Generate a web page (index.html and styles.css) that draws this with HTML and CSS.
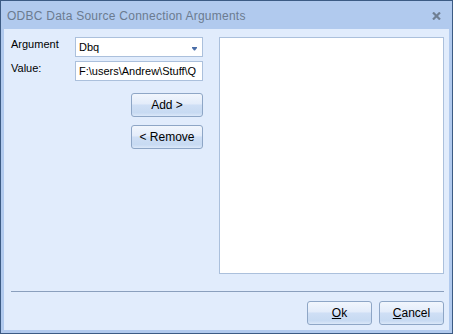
FILE: index.html
```html
<!DOCTYPE html>
<html lang="en">
<head>
    <meta charset="UTF-8">
    <title>ODBC Data Source Connection Arguments</title>
    <link rel="stylesheet" href="styles.css">
</head>
<body>
    <div class="window">
        <div class="titlebar">
            <span class="title">ODBC Data Source Connection Arguments</span>
            <svg class="close" width="9" height="8" viewBox="0 0 9 8">
                <path d="M1 0.5 L8 7.5 M8 0.5 L1 7.5" stroke="#6f7f93" stroke-width="2.2"/>
            </svg>
        </div>

        <div class="client">
            <div class="main">
                <div class="left">
                    <div class="field">
                        <label>Argument</label>
                        <div class="combo">
                            <span>Dbq</span>
                            <svg class="arrow" width="5" height="4" viewBox="0 0 5 4">
                                <path d="M0 0 H5 V1 L3 3.5 H2 L0 1 Z" fill="#4b6ea8"/>
                            </svg>
                        </div>
                    </div>
                    <div class="field">
                        <label>Value:</label>
                        <div class="textbox">F:\users\Andrew\Stuff\Q</div>
                    </div>
                    <div class="side-buttons">
                        <button class="btn">Add &gt;</button>
                        <button class="btn">&lt; Remove</button>
                    </div>
                </div>
                <div class="listbox"></div>
            </div>

            <div class="separator"></div>

            <div class="footer">
                <button class="btn wide"><u>O</u>k</button>
                <button class="btn wide"><u>C</u>ancel</button>
            </div>
        </div>
    </div>
</body>
</html>
```

FILE: styles.css
```css
* {
    margin: 0;
    padding: 0;
    box-sizing: border-box;
}

body {
    font-family: 'Liberation Sans', Arial, sans-serif;
    font-size: 11px;
    color: #000;
    background: #e1ecfc;
}

.window {
    width: 453px;
    height: 334px;
    border: 1px solid #3c5b84;
    background: #b1caee;
    padding: 0 3px 3px 3px;
    display: flex;
    flex-direction: column;
}

.titlebar {
    height: 28px;
    display: flex;
    align-items: center;
    justify-content: space-between;
    padding: 0 8px 0 3px;
}

.title {
    font-size: 12px;
    letter-spacing: 0.25px;
    color: #6b7b90;
    padding-top: 2px;
}

.close {
    display: block;
    margin-top: 1px;
}

.client {
    flex: 1;
    background: #e1ecfc;
    padding: 8px 5px 5px 7px;
    display: flex;
    flex-direction: column;
}

.main {
    display: flex;
    gap: 16px;
    height: 237px;
}

.left {
    width: 192px;
    display: flex;
    flex-direction: column;
    gap: 4px;
}

.field {
    display: flex;
    height: 20px;
}

.field label {
    width: 64px;
    padding-top: 1px;
}

.combo,
.textbox {
    flex: 1;
    background: #fff;
    border: 1px solid #abc0dc;
    padding: 3px 0 0 3px;
    white-space: nowrap;
    overflow: hidden;
    font-size: 11px;
}

.combo {
    display: flex;
    justify-content: space-between;
}

.arrow {
    margin: 6px 5px 0 0;
}

.side-buttons {
    display: flex;
    flex-direction: column;
    align-items: flex-end;
    gap: 8px;
    margin-top: 8px;
}

.btn {
    width: 72px;
    height: 24px;
    font-family: 'Liberation Sans', Arial, sans-serif;
    font-size: 12px;
    color: #000;
    border: 1px solid #8ea6c6;
    border-radius: 3px;
    background: linear-gradient(#f1f6fd 0%, #e3ecfa 45%, #cfdff5 50%, #c7daf2 85%, #dbe8f9 100%);
}

.btn u {
    text-decoration: underline;
}

.listbox {
    flex: 1;
    background: #fff;
    border: 1px solid #abc0dc;
}

.separator {
    height: 1px;
    background: #8a9fbd;
    margin-top: 17px;
}

.footer {
    display: flex;
    justify-content: flex-end;
    gap: 7px;
    margin-top: 9px;
}

.btn.wide {
    width: 65px;
}
```
